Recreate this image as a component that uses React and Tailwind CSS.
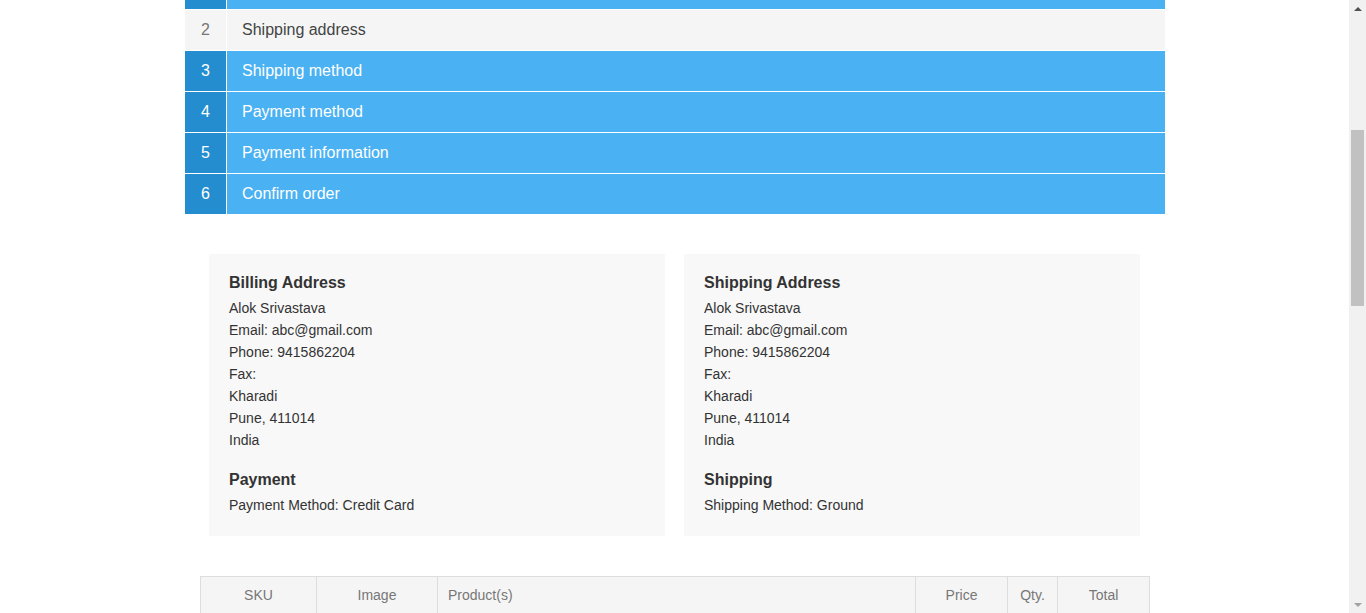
import React from "react";

const steps = [
  { n: 1, label: "Checkout method", active: false },
  { n: 2, label: "Shipping address", active: true },
  { n: 3, label: "Shipping method", active: false },
  { n: 4, label: "Payment method", active: false },
  { n: 5, label: "Payment information", active: false },
  { n: 6, label: "Confirm order", active: false },
];

function Step({ n, label, active }) {
  return (
    <div className="flex h-[40px] mb-[1px]">
      <div
        className={`w-[41px] flex items-center justify-center text-[16px] ${
          active ? "bg-[#f5f5f5] text-[#777]" : "bg-[#238dcf] text-white"
        }`}
      >
        {n}
      </div>
      <div
        className={`ml-[1px] flex-1 flex items-center pl-[15px] text-[16px] ${
          active ? "bg-[#f5f5f5] text-[#444]" : "bg-[#4ab1f2] text-white"
        }`}
      >
        {label}
      </div>
    </div>
  );
}

function Card({ title, lines, title2, line2 }) {
  return (
    <div className="w-[456px] bg-[#f8f8f8] pt-[19px] pb-[20px] px-[20px] text-[#333]">
      <div className="text-[16px] leading-[20px] font-bold text-[#333]">{title}</div>
      <div className="mt-[4px] text-[14px] leading-[22px]">
        {lines.map((l, i) => (
          <div key={i}>{l}</div>
        ))}
      </div>
      <div className="mt-[19px] text-[16px] leading-[20px] font-bold">{title2}</div>
      <div className="mt-[4px] text-[14px] leading-[22px]">{line2}</div>
    </div>
  );
}

const addr = [
  "Alok Srivastava",
  "Email: abc@gmail.com",
  "Phone: 9415862204",
  "Fax:",
  "Kharadi",
  "Pune, 411014",
  "India",
];

export default function App() {
  return (
    <div
      className="flex h-[613px] overflow-hidden bg-white"
      style={{ fontFamily: '"Liberation Sans", Arial, sans-serif' }}
    >
      <div className="flex-1 overflow-hidden">
        <div className="w-[980px] ml-[185px] mt-[-31px]">
          {steps.map((s) => (
            <Step key={s.n} {...s} />
          ))}
          <div className="flex gap-[19px] pl-[24px] mt-[40px]">
            <Card title="Billing Address" lines={addr} title2="Payment" line2="Payment Method: Credit Card" />
            <Card title="Shipping Address" lines={addr} title2="Shipping" line2="Shipping Method: Ground" />
          </div>
          <div className="ml-[15px] w-[950px] mt-[40px]">
            <div className="flex h-[38px] bg-[#f5f5f5] border border-[#ddd] text-[14px] text-[#777]">
              <div className="w-[116px] flex items-center justify-center border-r border-[#ddd]">SKU</div>
              <div className="w-[121px] flex items-center justify-center border-r border-[#ddd]">Image</div>
              <div className="w-[478px] flex items-center pl-[10px] border-r border-[#ddd]">Product(s)</div>
              <div className="w-[92px] flex items-center justify-center border-r border-[#ddd]">Price</div>
              <div className="w-[50px] flex items-center justify-center border-r border-[#ddd]">Qty.</div>
              <div className="flex-1 flex items-center justify-center">Total</div>
            </div>
          </div>
        </div>
      </div>
      <div className="w-[17px] h-full bg-[#f1f1f1] flex flex-col items-center">
        <div className="h-[17px] w-full flex items-center justify-center">
          <svg width="8" height="4" viewBox="0 0 8 4">
            <path d="M0 4 L4 0 L8 4 Z" fill="#505050" />
          </svg>
        </div>
        <div className="mt-[113px] w-[13px] h-[176px] bg-[#c1c1c1]" />
        <div className="flex-1" />
        <div className="h-[17px] w-full flex items-center justify-center">
          <svg width="8" height="4" viewBox="0 0 8 4">
            <path d="M0 0 L8 0 L4 4 Z" fill="#a3a3a3" />
          </svg>
        </div>
      </div>
    </div>
  );
}
